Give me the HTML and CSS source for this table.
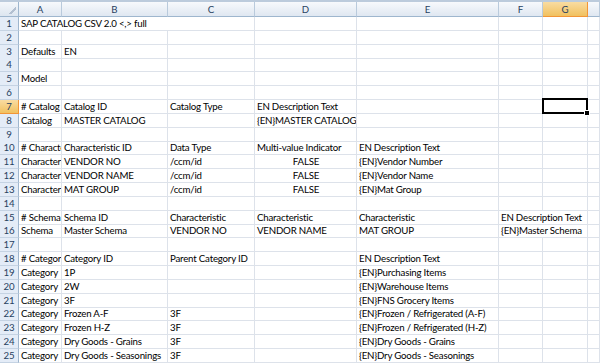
FILE: index.html
```html
<!DOCTYPE html>
<html lang="en">
<head>
    <meta charset="UTF-8">
    <meta name="viewport" content="width=device-width, initial-scale=1.0">
    <title>SAP Catalog CSV</title>
    <link rel="stylesheet" href="styles.css">
</head>
<body>
    <div class="sheet">
        <div class="row head">
            <div class="corner"></div>
            <div class="col">A</div>
            <div class="col">B</div>
            <div class="col">C</div>
            <div class="col">D</div>
            <div class="col">E</div>
            <div class="col">F</div>
            <div class="col active">G</div>
            <div class="col"></div>
        </div>

        <div class="row">
            <div class="num">1</div>
            <div class="cell span3">SAP CATALOG CSV 2.0 &lt;,&gt; full</div>
            <div class="cell"></div><div class="cell"></div><div class="cell"></div><div class="cell"></div><div class="cell"></div>
        </div>
        <div class="row">
            <div class="num">2</div>
            <div class="cell"></div><div class="cell"></div><div class="cell"></div><div class="cell"></div><div class="cell"></div><div class="cell"></div><div class="cell"></div><div class="cell"></div>
        </div>
        <div class="row">
            <div class="num">3</div>
            <div class="cell">Defaults</div><div class="cell">EN</div>
            <div class="cell"></div><div class="cell"></div><div class="cell"></div><div class="cell"></div><div class="cell"></div><div class="cell"></div>
        </div>
        <div class="row">
            <div class="num">4</div>
            <div class="cell"></div><div class="cell"></div><div class="cell"></div><div class="cell"></div><div class="cell"></div><div class="cell"></div><div class="cell"></div><div class="cell"></div>
        </div>
        <div class="row">
            <div class="num">5</div>
            <div class="cell">Model</div>
            <div class="cell"></div><div class="cell"></div><div class="cell"></div><div class="cell"></div><div class="cell"></div><div class="cell"></div><div class="cell"></div>
        </div>
        <div class="row">
            <div class="num">6</div>
            <div class="cell"></div><div class="cell"></div><div class="cell"></div><div class="cell"></div><div class="cell"></div><div class="cell"></div><div class="cell"></div><div class="cell"></div>
        </div>
        <div class="row">
            <div class="num active">7</div>
            <div class="cell"># Catalog</div>
            <div class="cell">Catalog ID</div>
            <div class="cell">Catalog Type</div>
            <div class="cell">EN Description Text</div>
            <div class="cell"></div><div class="cell"></div>
            <div class="cell selected"></div>
            <div class="cell"></div>
        </div>
        <div class="row">
            <div class="num">8</div>
            <div class="cell">Catalog</div>
            <div class="cell">MASTER CATALOG</div>
            <div class="cell"></div>
            <div class="cell">{EN}MASTER CATALOG</div>
            <div class="cell"></div><div class="cell"></div><div class="cell"></div><div class="cell"></div>
        </div>
        <div class="row">
            <div class="num">9</div>
            <div class="cell"></div><div class="cell"></div><div class="cell"></div><div class="cell"></div><div class="cell"></div><div class="cell"></div><div class="cell"></div><div class="cell"></div>
        </div>
        <div class="row">
            <div class="num">10</div>
            <div class="cell"># Characteristic</div>
            <div class="cell">Characteristic ID</div>
            <div class="cell">Data Type</div>
            <div class="cell">Multi-value Indicator</div>
            <div class="cell">EN Description Text</div>
            <div class="cell"></div><div class="cell"></div><div class="cell"></div>
        </div>
        <div class="row">
            <div class="num">11</div>
            <div class="cell">Characteristic</div>
            <div class="cell">VENDOR NO</div>
            <div class="cell">/ccm/id</div>
            <div class="cell bool">FALSE</div>
            <div class="cell">{EN}Vendor Number</div>
            <div class="cell"></div><div class="cell"></div><div class="cell"></div>
        </div>
        <div class="row">
            <div class="num">12</div>
            <div class="cell">Characteristic</div>
            <div class="cell">VENDOR NAME</div>
            <div class="cell">/ccm/id</div>
            <div class="cell bool">FALSE</div>
            <div class="cell">{EN}Vendor Name</div>
            <div class="cell"></div><div class="cell"></div><div class="cell"></div>
        </div>
        <div class="row">
            <div class="num">13</div>
            <div class="cell">Characteristic</div>
            <div class="cell">MAT GROUP</div>
            <div class="cell">/ccm/id</div>
            <div class="cell bool">FALSE</div>
            <div class="cell">{EN}Mat Group</div>
            <div class="cell"></div><div class="cell"></div><div class="cell"></div>
        </div>
        <div class="row">
            <div class="num">14</div>
            <div class="cell"></div><div class="cell"></div><div class="cell"></div><div class="cell"></div><div class="cell"></div><div class="cell"></div><div class="cell"></div><div class="cell"></div>
        </div>
        <div class="row">
            <div class="num">15</div>
            <div class="cell"># Schema</div>
            <div class="cell">Schema ID</div>
            <div class="cell">Characteristic</div>
            <div class="cell">Characteristic</div>
            <div class="cell">Characteristic</div>
            <div class="cell span2">EN Description Text</div>
            <div class="cell"></div>
        </div>
        <div class="row">
            <div class="num">16</div>
            <div class="cell">Schema</div>
            <div class="cell">Master Schema</div>
            <div class="cell">VENDOR NO</div>
            <div class="cell">VENDOR NAME</div>
            <div class="cell">MAT GROUP</div>
            <div class="cell span2">{EN}Master Schema</div>
            <div class="cell"></div>
        </div>
        <div class="row">
            <div class="num">17</div>
            <div class="cell"></div><div class="cell"></div><div class="cell"></div><div class="cell"></div><div class="cell"></div><div class="cell"></div><div class="cell"></div><div class="cell"></div>
        </div>
        <div class="row">
            <div class="num">18</div>
            <div class="cell"># Category</div>
            <div class="cell">Category ID</div>
            <div class="cell">Parent Category ID</div>
            <div class="cell"></div>
            <div class="cell">EN Description Text</div>
            <div class="cell"></div><div class="cell"></div><div class="cell"></div>
        </div>
        <div class="row">
            <div class="num">19</div>
            <div class="cell">Category</div>
            <div class="cell">1P</div>
            <div class="cell"></div><div class="cell"></div>
            <div class="cell">{EN}Purchasing Items</div>
            <div class="cell"></div><div class="cell"></div><div class="cell"></div>
        </div>
        <div class="row">
            <div class="num">20</div>
            <div class="cell">Category</div>
            <div class="cell">2W</div>
            <div class="cell"></div><div class="cell"></div>
            <div class="cell">{EN}Warehouse Items</div>
            <div class="cell"></div><div class="cell"></div><div class="cell"></div>
        </div>
        <div class="row">
            <div class="num">21</div>
            <div class="cell">Category</div>
            <div class="cell">3F</div>
            <div class="cell"></div><div class="cell"></div>
            <div class="cell">{EN}FNS Grocery Items</div>
            <div class="cell"></div><div class="cell"></div><div class="cell"></div>
        </div>
        <div class="row">
            <div class="num">22</div>
            <div class="cell">Category</div>
            <div class="cell">Frozen A-F</div>
            <div class="cell">3F</div>
            <div class="cell"></div>
            <div class="cell">{EN}Frozen / Refrigerated (A-F)</div>
            <div class="cell"></div><div class="cell"></div><div class="cell"></div>
        </div>
        <div class="row">
            <div class="num">23</div>
            <div class="cell">Category</div>
            <div class="cell">Frozen H-Z</div>
            <div class="cell">3F</div>
            <div class="cell"></div>
            <div class="cell">{EN}Frozen / Refrigerated (H-Z)</div>
            <div class="cell"></div><div class="cell"></div><div class="cell"></div>
        </div>
        <div class="row">
            <div class="num">24</div>
            <div class="cell">Category</div>
            <div class="cell">Dry Goods - Grains</div>
            <div class="cell">3F</div>
            <div class="cell"></div>
            <div class="cell">{EN}Dry Goods - Grains</div>
            <div class="cell"></div><div class="cell"></div><div class="cell"></div>
        </div>
        <div class="row">
            <div class="num">25</div>
            <div class="cell">Category</div>
            <div class="cell">Dry Goods - Seasonings</div>
            <div class="cell">3F</div>
            <div class="cell"></div>
            <div class="cell">{EN}Dry Goods - Seasonings</div>
            <div class="cell"></div><div class="cell"></div><div class="cell"></div>
        </div>
    </div>
</body>
</html>
```

FILE: styles.css
```css
html, body {
    margin: 0;
    padding: 0;
    background: #fff;
    overflow: hidden;
}
.sheet {
    font-family: Lato, "Open Sans", sans-serif;
    font-size: 9.7px;
    letter-spacing: -0.2px;
    color: #000;
    border-top: 2px solid #bccbdc;
}
.row {
    display: grid;
    grid-template-columns: 19px 43px 106px 87px 102px 142px 44px 45px 1fr;
    height: 13.83px;
}
.row.head {
    height: 15px;
}

/* column letters and row numbers */
.corner, .col, .num {
    box-sizing: border-box;
    color: #27415f;
    text-align: center;
    white-space: nowrap;
    letter-spacing: 0;
}
.corner {
    border-right: 1px solid #9eb6ce;
    border-bottom: 1px solid #9eb6ce;
    background: linear-gradient(135deg, transparent 62%, #b3c0d1 62%, #b3c0d1 80%, transparent 80%) no-repeat right 2px bottom 2px / 10px 10px,
                linear-gradient(#f4f7fb, #dde6f0);
}
.col {
    line-height: 14px;
    border-right: 1px solid #b9cadc;
    border-bottom: 1px solid #9eb6ce;
    background: linear-gradient(#f7f9fc, #dfe7f1);
}
.num {
    line-height: 13px;
    border-right: 1px solid #9eb6ce;
    border-bottom: 1px solid #c5d3e3;
    background: #e4ecf7;
}
.col.active, .num.active {
    background: linear-gradient(#f9dca2, #f1c15f);
    border-right-color: #f29536;
    border-bottom-color: #f29536;
}

/* worksheet cells */
.cell {
    box-sizing: border-box;
    padding: 0 1px 0 2px;
    line-height: 13px;
    white-space: nowrap;
    overflow: hidden;
    border-right: 1px solid #dde2ea;
    border-bottom: 1px solid #dde2ea;
}
.cell.span2 {
    grid-column: span 2;
}
.cell.span3 {
    grid-column: span 3;
}
.cell.bool {
    text-align: center;
}
.cell.selected {
    position: relative;
    overflow: visible;
}
.cell.selected::before {
    content: "";
    position: absolute;
    left: -1px;
    top: -2px;
    right: -1px;
    bottom: -1px;
    border: 2px solid #000;
}
.cell.selected::after {
    content: "";
    position: absolute;
    right: -3px;
    bottom: -3px;
    width: 4px;
    height: 4px;
    background: #000;
    border: 1px solid #fff;
}
```
